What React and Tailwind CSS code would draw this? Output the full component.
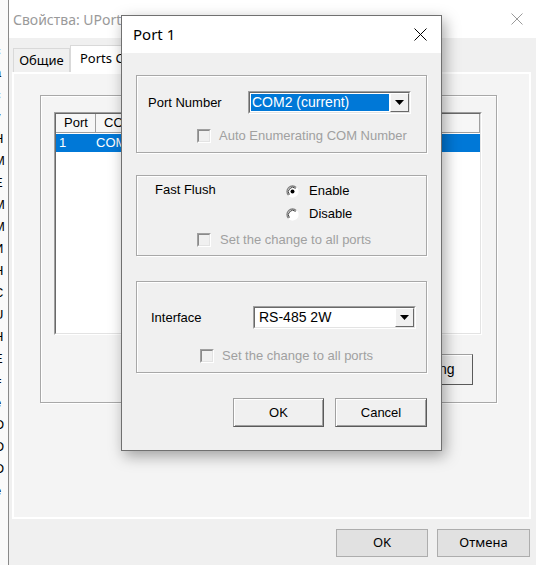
import React from "react";

const sans = "font-['Liberation_Sans',Arial,sans-serif]";
const ui = "font-['Noto_Sans','Open_Sans',sans-serif]";

const Check = () => (
  <div className="w-[14px] h-[14px] shrink-0 border border-[#a0a0a0] border-b-white border-r-white">
    <div className="w-full h-full border border-[#8a8a8a] border-b-[#e3e3e3] border-r-[#e3e3e3] bg-[#f0f0f0]" />
  </div>
);

const Radio = ({ on }) => (
  <svg width="13" height="13" viewBox="0 0 13 13" className="shrink-0">
    <circle cx="6.5" cy="6.5" r="5.5" fill="#fff" />
    <path d="M2.6 10.4 A5.5 5.5 0 0 1 10.4 2.6" fill="none" stroke="#808080" strokeWidth="1.3" />
    <path d="M3.4 9.6 A4.4 4.4 0 0 1 9.6 3.4" fill="none" stroke="#404040" strokeWidth="1" />
    <path d="M10.4 2.6 A5.5 5.5 0 0 1 2.6 10.4" fill="none" stroke="#fff" strokeWidth="1.3" />
    {on && <circle cx="6.5" cy="6.5" r="2" fill="#000" />}
  </svg>
);

const Combo = ({ value, selected }) => (
  <div className="w-[163px] h-[23px] border border-[#a0a0a0] border-b-white border-r-white">
    <div className="w-full h-full flex border border-[#696969] border-b-[#e3e3e3] border-r-[#e3e3e3] bg-white">
      <div className="flex-1 flex items-center p-[1px]">
        <span
          className={
            selected
              ? "h-full flex-1 flex items-center pl-[1px] bg-[#0078d7] text-white text-[14px]"
              : "pl-[3px] text-black text-[14px]"
          }
        >
          {value}
        </span>
      </div>
      <div className="w-[19px] flex items-center justify-center bg-[#f0f0f0] border border-white border-b-[#696969] border-r-[#696969]">
        <svg width="9" height="5" viewBox="0 0 9 5">
          <path d="M0 0h9L4.5 5z" fill="#000" />
        </svg>
      </div>
    </div>
  </div>
);

const Group = ({ className, children }) => (
  <div
    className={
      "border border-[#a8a8a8] shadow-[inset_1px_1px_0_#fff,1px_1px_0_#fff] " +
      className
    }
  >
    {children}
  </div>
);

const DlgButton = ({ children, def }) => (
  <div
    className={
      "h-[29px] flex items-center justify-center bg-[#f0f0f0] border border-[#a0a0a0] border-b-[#5a5a5a] border-r-[#5a5a5a] shadow-[inset_1px_1px_0_#fff,inset_-1px_-1px_0_#a0a0a0] text-[13px] text-black " +
      (def ? "w-[91px]" : "w-[92px]")
    }
  >
    {children}
  </div>
);

const edgeLetters = ["с", "а", "с", "у", "Н", "М", "Е", "М", "М", "И", "Н", "С", "U", "Н", "Е", "=", "е", "О", "О", "О", "е"];

const App = () => {
  return (
    <div className="relative w-[536px] h-[565px] overflow-hidden flex bg-[#f0f0f0] text-black">
      {/* window behind, only its edge shows */}
      <div className="w-[9px] shrink-0 overflow-hidden bg-[#fafafa] border-r border-[#8a8a8a]">
        <div className={`-ml-[6px] pt-[40px] flex flex-col leading-[22px] text-[13px] ${sans}`}>
          {edgeLetters.map((l, i) => (
            <span key={i}>{l}</span>
          ))}
        </div>
      </div>

      {/* properties window */}
      <div className="flex-1 flex flex-col">
        <div className="h-[38px] shrink-0 bg-white flex items-center justify-between pl-[4px] pr-[13px]">
          <span className={`text-[14px] text-[#9a9a9a] ${ui}`}>Свойства: UPort 1150</span>
          <svg width="12" height="12" viewBox="0 0 12 12">
            <path d="M0.5 0.5l11 11M11.5 0.5l-11 11" stroke="#9a9a9a" strokeWidth="1" />
          </svg>
        </div>

        <div className={`h-[34px] shrink-0 flex items-end pl-[4px] text-[13px] ${ui}`}>
          <div className="w-[57px] h-[24px] flex items-center justify-center border border-b-0 border-[#d9d9d9] bg-[#f0f0f0]">
            Общие
          </div>
          <div className="h-[27px] pl-[9px] pr-[10px] flex items-center border border-b-0 border-[#d9d9d9] bg-white">
            Ports Configuration
          </div>
        </div>

        <div className="h-[447px] ml-[3px] mr-[5px] border-2 border-white bg-[#f4f4f4] flex flex-col">
          <Group className="ml-[26px] mt-[21px] w-[457px] h-[308px] flex flex-col">
            <div className={`ml-[13px] mt-[16px] w-[428px] h-[223px] border border-[#a0a0a0] border-b-white border-r-white ${sans} text-[13px]`}>
              <div className="w-full h-full bg-white border border-[#696969] border-b-[#e3e3e3] border-r-[#e3e3e3] flex flex-col">
                <div className="h-[19px] flex bg-[#f7f7f7] border-b border-[#a0a0a0]">
                  <div className="w-[40px] pl-[8px] flex items-center border-r border-[#a0a0a0]">Port</div>
                  <div className="w-[110px] pl-[8px] flex items-center border-r border-[#a0a0a0]">COM Number</div>
                  <div className="flex-1 border-r border-[#a0a0a0]" />
                </div>
                <div className="mt-[1px] h-[18px] flex items-center bg-[#0078d7] text-white">
                  <span className="w-[40px] pl-[3px]">1</span>
                  <span>COM2</span>
                </div>
              </div>
            </div>
            <div className="mt-[19px] ml-auto mr-[23px] w-[110px] h-[31px] flex items-center justify-center bg-[#f0f0f0] border border-[#a0a0a0] border-b-[#5a5a5a] border-r-[#5a5a5a] shadow-[inset_1px_1px_0_#fff] text-[14px]">
              <span className={sans}>Port Setting</span>
            </div>
          </Group>
        </div>

        <div className={`mt-[10px] flex justify-end gap-[9px] pr-[6px] text-[13px] ${ui}`}>
          <div className="w-[92px] h-[28px] flex items-center justify-center bg-[#e1e1e1] border border-[#adadad]">OK</div>
          <div className="w-[93px] h-[28px] flex items-center justify-center bg-[#e1e1e1] border border-[#adadad]">Отмена</div>
        </div>
      </div>

      {/* Port 1 dialog on top */}
      <div className="absolute left-[121px] top-[15px] w-[321px] h-[436px] flex flex-col bg-[#f0f0f0] border border-[#707070] shadow-[3px_5px_14px_rgba(0,0,0,0.35)]">
        <div className="h-[37px] shrink-0 bg-white flex items-center justify-between pl-[11px] pr-[14px]">
          <span className={`text-[15px] text-black ${ui}`}>Port 1</span>
          <svg width="13" height="13" viewBox="0 0 13 13">
            <path d="M0.5 0.5l12 12M12.5 0.5l-12 12" stroke="#000" strokeWidth="1" />
          </svg>
        </div>

        <div className={`flex flex-col px-[14px] pt-[22px] text-[13px] ${sans}`}>
          <Group className="h-[78px] flex flex-col">
            <div className="mt-[15px] flex items-center">
              <span className="ml-[11px] w-[100px]">Port Number</span>
              <Combo value="COM2 (current)" selected />
            </div>
            <div className="mt-[12px] ml-[60px] flex items-center gap-[8px] text-[#a0a0a0]">
              <Check />
              <span>Auto Enumerating COM Number</span>
            </div>
          </Group>

          <Group className="mt-[22px] h-[81px] flex flex-col">
            <div className="mt-[7px] h-[16px] flex items-center">
              <span className="ml-[18px] w-[131px] -mt-[2px]">Fast Flush</span>
              <Radio on />
              <span className="ml-[10px]">Enable</span>
            </div>
            <div className="mt-[7px] h-[16px] flex items-center">
              <span className="ml-[149px]" />
              <Radio />
              <span className="ml-[10px]">Disable</span>
            </div>
            <div className="mt-[10px] ml-[60px] h-[16px] flex items-center gap-[9px] text-[#a0a0a0]">
              <Check />
              <span>Set the change to all ports</span>
            </div>
          </Group>

          <Group className="mt-[25px] h-[92px] flex flex-col">
            <div className="mt-[24px] flex items-center">
              <span className="ml-[14px] w-[102px]">Interface</span>
              <Combo value="RS-485 2W" />
            </div>
            <div className="mt-[17px] ml-[63px] flex items-center gap-[8px] text-[#a0a0a0]">
              <Check />
              <span>Set the change to all ports</span>
            </div>
          </Group>

          <div className="mt-[25px] flex justify-end gap-[11px]">
            <DlgButton def>OK</DlgButton>
            <DlgButton>Cancel</DlgButton>
          </div>
        </div>
      </div>
    </div>
  );
};

export default App;
